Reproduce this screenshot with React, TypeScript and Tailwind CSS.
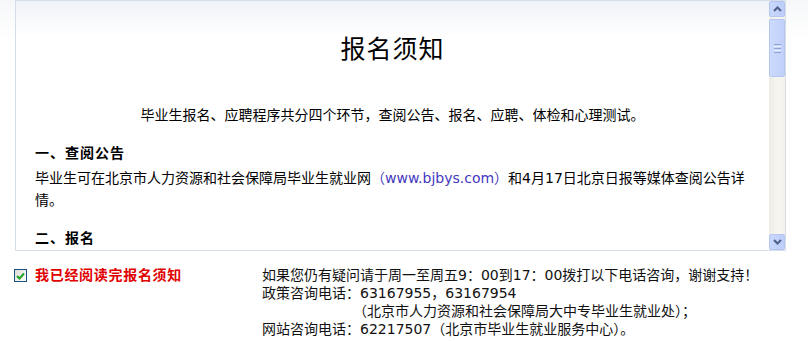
import React from "react";

const sans = { fontFamily: '"DejaVu Sans", "Noto Sans CJK SC", sans-serif' };

function ScrollButton({ dir }: { dir: "up" | "down" }) {
  return (
    <div className="h-[16px] w-[16px] rounded-[2px] border border-[#b4c6f0] bg-[linear-gradient(90deg,#c9d8fd,#bccdf9)] flex items-center justify-center">
      <svg width="9" height="6" viewBox="0 0 9 6">
        {dir === "up" ? (
          <path d="M1 5 L4.5 1.5 L8 5" stroke="#4d6185" strokeWidth="2" fill="none" />
        ) : (
          <path d="M1 1 L4.5 4.5 L8 1" stroke="#4d6185" strokeWidth="2" fill="none" />
        )}
      </svg>
    </div>
  );
}

function Scrollbar() {
  return (
    <div className="w-[16px] flex flex-col bg-[linear-gradient(90deg,#eeede5,#f6f5f0_60%,#f2f1ea)]">
      <ScrollButton dir="up" />
      <div className="mt-[2px] h-[58px] w-[16px] rounded-[2px] border border-[#b4c6f0] bg-[linear-gradient(90deg,#cddafd,#c0d0fa)] flex flex-col items-center justify-center gap-[1px]">
        <div className="h-[1px] w-[7px] bg-[#8fa5d6]" />
        <div className="h-[1px] w-[7px] bg-[#eef2fe]" />
        <div className="h-[1px] w-[7px] bg-[#8fa5d6]" />
        <div className="h-[1px] w-[7px] bg-[#eef2fe]" />
        <div className="h-[1px] w-[7px] bg-[#8fa5d6]" />
      </div>
      <div className="flex-1" />
      <ScrollButton dir="down" />
    </div>
  );
}

function Checkbox() {
  return (
    <div className="h-[13px] w-[13px] border border-[#1c5180] bg-[linear-gradient(135deg,#dcdcd6,#fff)] flex items-center justify-center">
      <svg width="9" height="8" viewBox="0 0 9 8">
        <path d="M1 4 L3.5 6.5 L8 1.5" stroke="#21a121" strokeWidth="2" fill="none" />
      </svg>
    </div>
  );
}

export default function App() {
  return (
    <div
      className="w-[808px] h-[341px] bg-[linear-gradient(#f6f7f9,#ffffff_40px)] text-black text-[14px]"
      style={sans}
    >
      <div className="ml-[15px] w-[771px] h-[251px] border border-[#d5dee8] flex overflow-hidden bg-[linear-gradient(#eff2f6,#ffffff_35px)]">
        <div className="flex-1 flex flex-col overflow-hidden pt-[34px]">
          <div
            className="text-center text-[25px] leading-[30px] tracking-[1px]"
            style={{ fontFamily: '"Liberation Serif", "Noto Sans CJK SC", serif' }}
          >
            报名须知
          </div>
          <div className="mt-[39px] text-center leading-[22px] whitespace-nowrap">
            毕业生报名、应聘程序共分四个环节，查阅公告、报名、应聘、体检和心理测试。
          </div>
          <div className="mt-[16px] pl-[19px] leading-[22px] font-bold tracking-[1px]">一、查阅公告</div>
          <div className="mt-[3px] pl-[19px] leading-[22px] whitespace-nowrap">
            毕业生可在北京市人力资源和社会保障局毕业生就业网
            <span className="text-[#4338c0]">（www.bjbys.com）</span>
            和4月17日北京日报等媒体查阅公告详
            <br />
            情。
          </div>
          <div className="mt-[16px] pl-[19px] leading-[22px] font-bold tracking-[1px]">二、报名</div>
        </div>
        <Scrollbar />
      </div>
      <div className="flex pt-[15px]">
        <div className="w-[262px] flex items-start">
          <div className="ml-[14px] mt-[3px]">
            <Checkbox />
          </div>
          <div className="ml-[8px] leading-[18px] font-bold text-[#e00000] tracking-[0.7px]">
            我已经阅读完报名须知
          </div>
        </div>
        <div className="leading-[18px] whitespace-nowrap text-[#111]">
          <div>如果您仍有疑问请于周一至周五9：00到17：00拨打以下电话咨询，谢谢支持！</div>
          <div>政策咨询电话：63167955，63167954</div>
          <div className="pl-[91px]">（北京市人力资源和社会保障局大中专毕业生就业处）；</div>
          <div>网站咨询电话：62217507（北京市毕业生就业服务中心）。</div>
        </div>
      </div>
    </div>
  );
}
